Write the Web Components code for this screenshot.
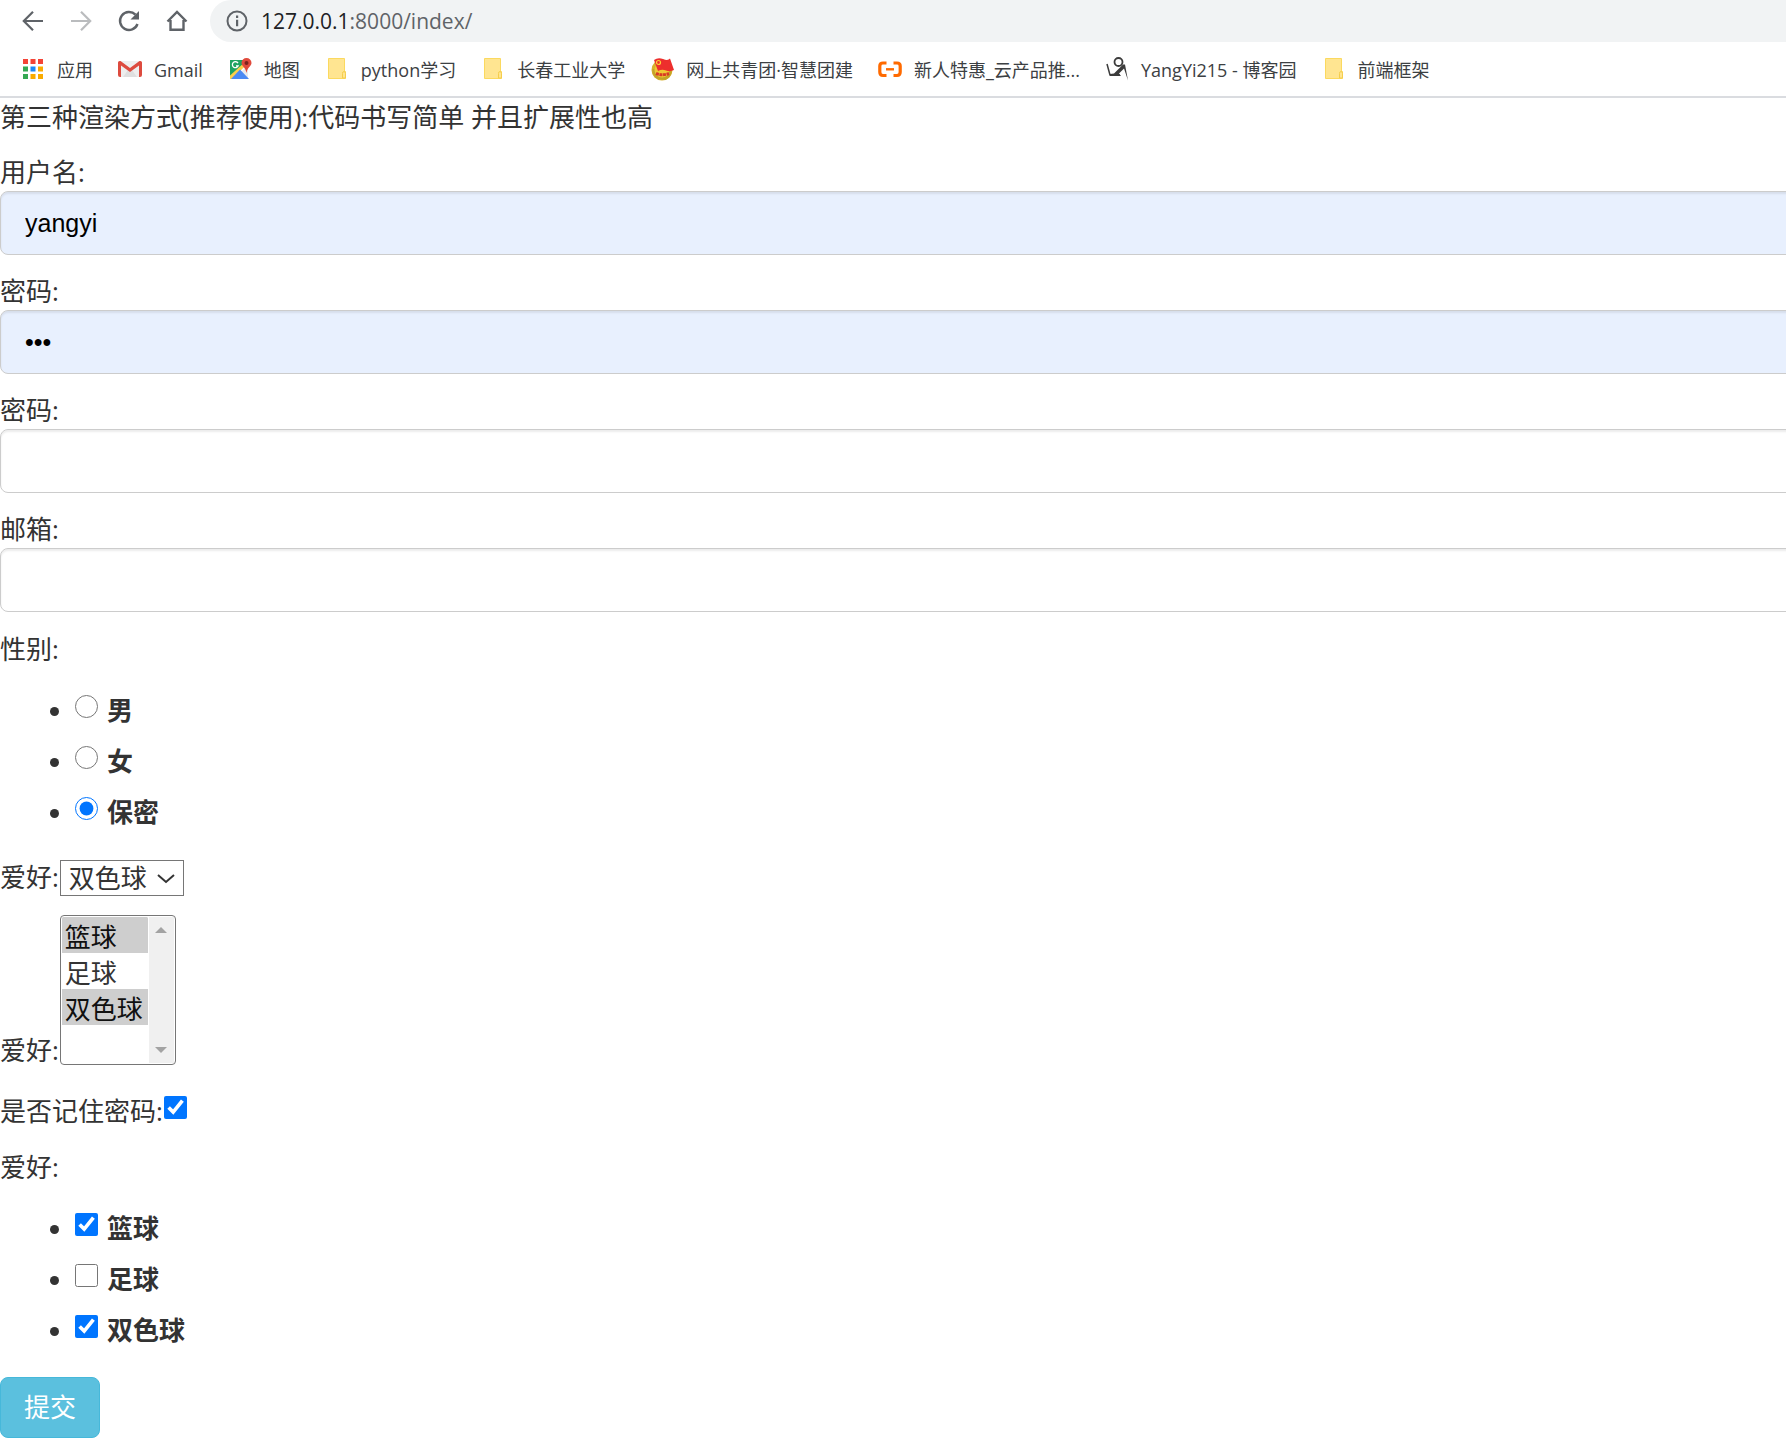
<!DOCTYPE html>
<html lang="zh-CN">
<head>
<meta charset="utf-8">
<title>index</title>
<style>
body{margin:0;background:#fff;color:#333;overflow-x:hidden;font:26px/37px "Open Sans","Noto Sans CJK SC",sans-serif}
</style>
</head>
<body>
<browser-bar host="127.0.0.1" path=":8000/index/">
  <book-mark icon="apps">应用</book-mark>
  <book-mark icon="gmail">Gmail</book-mark>
  <book-mark icon="map">地图</book-mark>
  <book-mark icon="folder">python学习</book-mark>
  <book-mark icon="folder">长春工业大学</book-mark>
  <book-mark icon="league">网上共青团·智慧团建</book-mark>
  <book-mark icon="cloud">新人特惠_云产品推...</book-mark>
  <book-mark icon="blog">YangYi215 - 博客园</book-mark>
  <book-mark icon="folder">前端框架</book-mark>
</browser-bar>
<register-form></register-form>

<script>
const icons = {
  apps: '<g><path fill="#f44336" d="M2 2h5v5H2zM9.500 2h5v5h-5zM17 2h5v5h-5z"/><path fill="#34a853" d="M2 9.500h5v5H2zM2 17h5v5H2z"/><path fill="#1e88f5" d="M9.500 9.500h5v5h-5z"/><path fill="#f9ab00" d="M17 9.500h5v5h-5zM9.500 17h5v5h-5zM17 17h5v5h-5z"/></g>',
  gmail: '<path fill="#eee" d="M3 4h18v16H3z"/><path fill="#d5d5d5" d="M5 20l5-7 2 2 2-2 5 7z" opacity=".6"/><path fill="#dd4b3e" d="M0 5.500Q0 3.500 2.500 4l9.500 7 9.500-7q2.500-.5 2.500 1.500V18q0 2-2 2h-1V8.500l-9 6.500-9-6.500V20H2q-2 0-2-2z"/>',
  map: '<path fill="#1ea362" d="M2 3h18v9L5 22H2z"/><path fill="#e8eaed" d="M20 6v16L10 12z"/><path fill="#fff" d="M2 22L20 5v3L5 23z"/><path fill="#fbd04b" d="M2 18.500L17 5l2 2.500L3.500 22H2z"/><path fill="#4a89f3" d="M12 12.500l9 9.500H3z"/><path d="M10 6.200a3 3 0 1 0 .2 2.600H8" fill="none" stroke="#fff" stroke-width="1.300"/><path fill="#e04a3c" d="M18.500 1a5 5 0 0 1 5 5c0 3-4 4-5 10-1-6-5-7-5-10a5 5 0 0 1 5-5z"/><circle cx="18.500" cy="6" r="2" fill="#7c231d"/>',
  folder: '<path d="M3.500 1.500h16v13h1v7h-17z" fill="#ffe591" stroke="#fbd95f"/><path d="M17.500 21v-4.500q0-2 1.500-2t1.500 2V21z" fill="#ffe591" stroke="#f5cd4c"/>',
  league: '<circle cx="12" cy="13" r="10.500" fill="#d8b02c"/><path d="M2.500 12a10 10 0 0 0 5 10l8 1a10 10 0 0 0 6-11" fill="#c3a428"/><circle cx="12" cy="13" r="7.500" fill="#efc832"/><path fill="#ed2f2d" d="M4 3q4-3 9-1t7-.5L24 13q-4 2-8 .5T8 14z"/><circle cx="8.500" cy="5.500" r="2" fill="none" stroke="#fbcf34" stroke-width="1.200"/><path d="M6 16.500q6 2.500 13 0" fill="none" stroke="#d83a25" stroke-width="3" stroke-dasharray="3 .6"/>',
  cloud: '<g fill="none" stroke="#ff6a00" stroke-width="3.200"><path d="M8.500 6H5Q1.800 6 1.800 9v6q0 3.500 3.200 3.500h3.500M15.500 6H19q3.200 0 3.200 3v6q0 3.500-3.200 3.500h-3.500"/><path d="M8 12.300h8" stroke-width="2.400"/></g>',
  blog: '<g fill="none" stroke="#3c3c3c"><circle cx="13.500" cy="5" r="4" stroke-width="1.800"/><path d="M2 7l3 11h10" stroke-width="1.500"/></g><path fill="#3c3c3c" d="M5 17l4-.5 9-9h2l3 16-4-12-5 5 2 2.500H5z"/>',
  back: '<path d="M22 12H3.500M12 2.800L2.800 12l9.200 9.200" fill="none" stroke="#5f6368" stroke-width="2.200"/>',
  forward: '<path d="M2 12h18.500M12 2.800l9.200 9.200-9.200 9.200" fill="none" stroke="#babcbe" stroke-width="2.200"/>',
  reload: '<path d="M20.500 15A9 9 0 1 1 18.500 5.700" fill="none" stroke="#5f6368" stroke-width="2.400"/><path fill="#5f6368" d="M22 2v8.500h-8.500z"/>',
  home: '<path d="M2.500 12.500L12 3l9.500 9.500M5.500 11v9.800h13V11" fill="none" stroke="#5f6368" stroke-width="2.400"/>',
  info: '<circle cx="12" cy="12" r="9.500" fill="none" stroke="#5f6368" stroke-width="2"/><path fill="#5f6368" d="M11 6.500h2.200V9H11zM11 10.700h2.200v6.500H11z"/>'
};
const svg = name => `<svg width="24" height="24" viewBox="0 0 24 24" aria-hidden="true">${icons[name]}</svg>`;

class Base extends HTMLElement {
  connectedCallback() {
    if (this.shadowRoot) return;
    this.attachShadow({mode: 'open'}).innerHTML = '<style>*{box-sizing:border-box}svg{display:block;flex:none}</style>' + this.view();
  }
}

customElements.define('book-mark', class extends Base {
  view() {
    return `<style>
      :host{display:block;flex:none}
      a{display:flex;align-items:center;gap:12px;color:#3c4043;text-decoration:none;white-space:nowrap}
      span{padding-top:2px}
    </style><a href="#">${svg(this.getAttribute('icon'))}<span><slot></slot></span></a>`;
  }
});

customElements.define('browser-bar', class extends Base {
  view() {
    const button = (name, label) => `<button type="button" aria-label="${label}">${svg(name)}</button>`;
    return `<style>
      :host{display:block;border-bottom:2px solid #dadce0;overflow:hidden}
      .tools{display:flex;align-items:center;gap:21px;padding-left:21px;margin-right:-24px}
      .buttons{display:flex;gap:24px}
      button{border:0;background:none;padding:0}
      .address{flex:1;display:flex;align-items:center;gap:12px;height:42px;padding-left:15px;border-radius:21px;background:#f1f3f4;font-size:21px;color:#202124}
      .address span span{color:#5f6368}
      nav{display:flex;align-items:center;gap:25px;height:54px;padding-left:21px;font-size:18px;line-height:24px}
    </style>
    <div class="tools"><div class="buttons">${button('back', '后退')}${button('forward', '前进')}${button('reload', '刷新')}${button('home', '主页')}</div>
      <div class="address">${svg('info')}<span role="textbox" aria-label="地址" contenteditable="true" spellcheck="false">${this.getAttribute('host')}<span>${this.getAttribute('path')}</span></span></div>
    </div>
    <nav><slot></slot></nav>`;
  }
});

customElements.define('text-field', class extends Base {
  view() {
    const value = this.getAttribute('value') || '';
    return `<style>
      :host{display:block}
      label{display:block}
      input{display:block;width:100%;height:64px;margin:0;padding:0 24px;border:1px solid #ccc;border-radius:8px;background:#fff;color:#000;font:25px "Liberation Sans",Arial,sans-serif;box-shadow:inset 0 2px 2px rgba(0,0,0,.075)}
      input.filled{background:#e8f0fe}
    </style>
    <label for="field"><slot></slot></label>
    <input id="field" class="${value ? 'filled' : ''}" type="${this.getAttribute('type') || 'text'}" value="${value}">`;
  }
});

customElements.define('choice-list', class extends Base {
  view() {
    const type = this.getAttribute('type');
    const picked = this.getAttribute('picked').split(',');
    const items = this.getAttribute('options').split(',').map(text =>
      `<li><label><input type="${type}" name="choice" ${picked.includes(text) ? 'checked' : ''}><span>${text}</span></label></li>`);
    return `<style>
      :host{display:block}
      ul{margin:0;padding:0 0 0 75px}
      li{padding:5px 0 9px}
      label{display:inline-flex;align-items:flex-start;gap:9px;vertical-align:top;font-weight:700}
      input{width:23px;height:23px;margin:3px 0 0;accent-color:#0075ff}
    </style><ul>${items.join('')}</ul>`;
  }
});

customElements.define('drop-down', class extends Base {
  view() {
    return `<style>
      :host{display:flex;align-items:center;gap:1px}
      .box{display:grid;grid-template-columns:auto 30px;align-items:center}
      select{grid-area:1/1/2/3;appearance:none;height:36px;margin:0;padding:0 35px 0 8px;border:1px solid #767676;border-radius:0;background:#fff;color:#333;font:inherit;line-height:34px}
      svg{grid-area:1/2;pointer-events:none}
    </style>
    <label for="pick"><slot></slot></label>
    <div class="box"><select id="pick"><option>篮球</option><option>足球</option><option selected>双色球</option></select>
    <svg width="24" height="24" viewBox="0 0 24 24" aria-hidden="true"><path d="M4 9l8 7 8-7" fill="none" stroke="#333" stroke-width="2"/></svg></div>`;
  }
});

customElements.define('list-box', class extends Base {
  view() {
    return `<style>
      :host{display:flex;align-items:flex-end;gap:1px;height:154px}
      .box{align-self:flex-start;display:flex;height:150px;padding:1px;border:1px solid #767676;border-radius:4px;background:#fff}
      select{appearance:none;height:100%;margin:0;padding:0;border:0;background:#fff;color:#333;font:inherit;overflow:hidden;outline:0;scrollbar-width:none}
      option{height:36px;min-height:36px;padding:0 5px 0 3px;line-height:36px}
      option:checked{background:#cecece linear-gradient(#cecece,#cecece);color:#101010}
      .bar{display:flex;flex-direction:column;justify-content:space-between;align-items:center;width:25px;padding:10px 0;margin-left:1px;background:#f0f0f0}
    </style>
    <label for="many"><slot></slot></label>
    <div class="box"><select id="many" multiple size="4"><option selected>篮球</option><option>足球</option><option selected>双色球</option></select>
    <div class="bar" aria-hidden="true"><svg width="12" height="6"><path fill="#a3a3a3" d="M0 6l6-6 6 6z"/></svg><svg width="12" height="6"><path fill="#a3a3a3" d="M0 0h12L6 6z"/></svg></div></div>`;
  }
});

customElements.define('check-field', class extends Base {
  view() {
    return `<style>
      :host{display:flex;align-items:flex-end;gap:1px;height:42px}
      input{align-self:flex-start;width:23px;height:23px;margin:8px 0 0;accent-color:#0075ff}
    </style><label for="check"><slot></slot></label><input id="check" type="checkbox" checked>`;
  }
});

customElements.define('submit-button', class extends Base {
  view() {
    return `<style>
      :host{display:block}
      button{display:block;height:61px;margin:0;padding:0 23px;border:1px solid #46b8da;border-radius:8px;background:#5bc0de;color:#fff;font:inherit}
    </style><button type="submit"><slot></slot></button>`;
  }
});

customElements.define('register-form', class extends Base {
  view() {
    return `<style>
      :host{display:block;overflow:hidden;padding-top:1px}
      form{display:flex;flex-direction:column;gap:19px}
      .fields,.choices{display:flex;flex-direction:column}
      .fields{gap:18px;margin-right:-24px}
      .choices{gap:19px}
      p{margin:0}
    </style>
    <form>
      <div class="fields">
        <p>第三种渲染方式(推荐使用):代码书写简单 并且扩展性也高</p>
        <text-field value="yangyi">用户名:</text-field>
        <text-field type="password" value="123">密码:</text-field>
        <text-field type="password">密码:</text-field>
        <text-field type="email">邮箱:</text-field>
      </div>
      <div class="choices">
        <p>性别:</p>
        <choice-list type="radio" options="男,女,保密" picked="保密"></choice-list>
        <drop-down>爱好:</drop-down>
        <list-box>爱好:</list-box>
        <check-field>是否记住密码:</check-field>
        <p>爱好:</p>
        <choice-list type="checkbox" options="篮球,足球,双色球" picked="篮球,双色球"></choice-list>
        <submit-button>提交</submit-button>
      </div>
    </form>`;
  }
});
</script>
</body>
</html>
